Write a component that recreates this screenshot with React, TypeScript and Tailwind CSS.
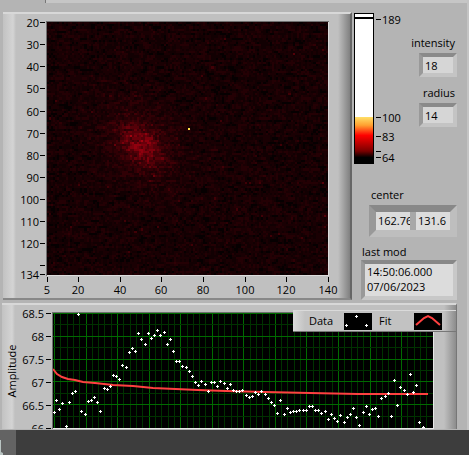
import React from 'react';

const COLS = 135;
const ROWS = 114;

// One colour per intensity level, dark to bright
const levelColors = [
  '#120002', '#1a0003', '#240004', '#300005', '#400006', '#540008',
  '#68000a', '#7c000c', '#90000e', '#a40410', '#b80a14',
];

const buildLevels = () => {
  let seed = 20230706;
  const random = () => {
    seed = (seed * 1664525 + 1013904223) % 4294967296;
    return seed / 4294967296;
  };
  const paths: string[] = levelColors.map(() => '');
  for (let y = 0; y < ROWS; y++) {
    let drift = 0.5;
    for (let x = 0; x < COLS; x++) {
      const u = (x - 45 + (y - 55)) / 1.414;
      const v = (x - 45 - (y - 55)) / 1.414;
      const core = Math.exp(-(u * u) / 130 - (v * v) / 65);
      const halo = Math.exp(-(u * u) / 480 - (v * v) / 240);
      // Neighbouring cells share part of their noise
      drift = drift * 0.35 + random() * 0.65;
      const noise = drift * 4.4 - 1.1;
      const hot = random() > 0.994 ? 2.5 : 0;
      const value = Math.floor(noise + hot + core * (3 + random() * 2) + halo * (1.6 + random() * 1.4));
      if (value < 0) continue;
      paths[Math.min(value, levelColors.length - 1)] += `M${x} ${y}h1v1h-1z`;
    }
  }
  return paths;
};

const levels = buildLevels();

const yTicks = [20, 30, 40, 50, 60, 70, 80, 90, 100, 110, 120, 130, 134];
const xTicks = [5, 20, 40, 60, 80, 100, 120, 140];

const IntensityGraph: React.FC = () => (
  <svg viewBox="0 0 347 284" className="block w-full h-auto text-[11px]" role="img" aria-label="Intensity graph">
    <rect x="43" y="7" width="283" height="255" fill="#707070" />
    <rect x="44" y="8" width="282" height="254" fill="#dcdcdc" />
    <svg x="44" y="8" width="281" height="253" viewBox="0 0 135 114" preserveAspectRatio="none">
      <rect width="135" height="114" fill="#060001" />
      {levels.map((d, i) => (
        <path key={i} d={d} fill={levelColors[i]} shapeRendering="crispEdges" />
      ))}
    </svg>
    <rect x="185" y="114" width="2" height="2" fill="#ffe04a" />
    {yTicks.map((value) => {
      const y = Math.round(8 + (value - 20) * 2.213);
      return (
        <g key={value}>
          <rect x="37" y={y} width="5" height="1" />
          {value !== 130 && <text x="36" y={y + 5} textAnchor="end">{value}</text>}
        </g>
      );
    })}
    {xTicks.map((value) => {
      const x = Math.round(44 + (value - 5) * 2.08);
      return (
        <g key={value}>
          <rect x={x} y="263" width="1" height="5" />
          <text x={x} y="280" textAnchor="middle">{value}</text>
        </g>
      );
    })}
  </svg>
);

const rampLabels = [
  { value: 189, y: 6 },
  { value: 100, y: 104 },
  { value: 83, y: 123 },
  { value: 64, y: 144 },
];

const ColorRamp: React.FC = () => (
  <svg width="50" height="151" viewBox="0 0 50 151" className="shrink-0 text-[11px]" role="img" aria-label="Color ramp">
    <defs>
      <linearGradient id="ramp" x1="0" y1="0" x2="0" y2="1">
        <stop offset="0" stopColor="#ffe068" />
        <stop offset="0.18" stopColor="#ffa030" />
        <stop offset="0.4" stopColor="#ff0000" />
        <stop offset="0.74" stopColor="#7a0000" />
        <stop offset="0.88" stopColor="#000000" />
      </linearGradient>
    </defs>
    <rect width="20" height="151" />
    <rect x="1" y="1" width="18" height="103" fill="#fff" />
    <rect x="1" y="4" width="18" height="2" />
    <rect x="1" y="104" width="18" height="46" fill="url(#ramp)" />
    {rampLabels.map((label) => (
      <g key={label.value}>
        <rect x="22" y={label.y} width="5" height="1" />
        <text x="28" y={label.y + 5}>{label.value}</text>
      </g>
    ))}
    <rect x="22" y="138" width="5" height="1" />
  </svg>
);

const points = [
  [1, 99], [3, 87], [6, 96], [9, 90], [13, 113], [16, 89], [19, 80], [22, 78], [25, 1], [28, 98],
  [32, 101], [35, 88], [38, 87], [41, 84], [44, 89], [47, 98], [51, 75], [54, 76], [57, 73], [60, 62],
  [63, 63], [66, 66], [69, 52], [73, 54], [76, 39], [79, 35], [82, 38], [85, 20], [88, 26], [92, 31],
  [95, 20], [98, 25], [101, 22], [104, 17], [107, 22], [111, 19], [114, 31], [117, 26], [120, 38], [123, 48],
  [126, 48], [129, 53], [133, 54], [136, 58], [139, 63], [142, 69], [145, 72], [148, 68], [152, 71], [155, 78],
  [158, 69], [161, 69], [164, 73], [167, 68], [171, 70], [174, 75], [177, 71], [180, 77], [183, 78], [186, 78],
  [189, 77], [193, 82], [196, 84], [199, 83], [202, 79], [205, 81], [208, 78], [212, 81], [215, 85], [218, 89],
  [221, 92], [224, 100], [227, 87], [231, 101], [234, 95], [237, 99], [240, 98], [243, 98], [246, 97], [250, 97],
  [253, 97], [256, 93], [259, 93], [262, 97], [265, 97], [268, 100], [272, 98], [275, 106], [278, 101], [281, 105],
  [284, 108], [287, 102], [291, 109], [294, 104], [297, 101], [300, 95], [303, 104], [306, 112], [310, 99], [313, 93],
  [316, 101], [319, 96], [322, 95], [325, 103], [328, 85], [332, 83], [335, 80], [338, 103], [341, 67], [344, 92],
  [347, 74], [351, 77], [354, 81], [357, 61], [360, 79], [363, 72], [366, 109], [370, 114],
];

const amplitudeTicks = ['68.5', '68', '67.5', '67', '66.5', '66'];

const marker = (x: number, y: number) => `M${x - 1} ${y}h3v1h-3zM${x} ${y - 1}h1v3h-1z`;

const AmplitudeChart: React.FC = () => (
  <svg viewBox="0 0 454 124" className="block w-full h-auto text-[11px]" role="img" aria-label="Amplitude chart">
    <text transform="translate(14 66) rotate(-90)" textAnchor="middle">Amplitude</text>
    {amplitudeTicks.map((label, i) => {
      const y = Math.round(8 + i * 22.9);
      return (
        <g key={label}>
          <rect x="44" y={y} width="5" height="1" />
          <text x="42" y={y + 5} textAnchor="end">{label}</text>
        </g>
      );
    })}
    <rect x="50" y="7" width="382" height="117" fill="#707070" />
    <rect x="51" y="8" width="381" height="116" fill="#e8e8e8" />
    <svg x="51" y="8" width="380" height="115">
      <rect width="380" height="115" />
      {Array.from({ length: 60 }, (_, i) => (
        <rect key={i} x={Math.round(1 + i * 6.31)} y="0" width="1" height="115" fill={i % 5 ? '#003200' : '#006a00'} />
      ))}
      {Array.from({ length: 10 }, (_, i) => (
        <rect key={i} x="0" y={Math.round(i * 11.4)} width="380" height="1" fill={i % 2 ? '#003200' : '#006a00'} />
      ))}
      <path
        d="M0 56L4 61L9 64L15 66L22 67L30 69L42 70L60 72L80 73L100 75L145 77L173 78L212 79L257 80L305 81H375"
        fill="none"
        stroke="#ff4040"
        strokeWidth="2"
      />
      <path d={points.map(([x, y]) => marker(x, y)).join('')} fill="#fff" />
    </svg>
  </svg>
);

const Legend: React.FC = () => (
  <div className="absolute right-0 top-[5px] flex h-[22px] w-[163px] items-center border-b border-t border-b-[#777] border-t-[#dadada] bg-[linear-gradient(to_right,#dcdcdc,#c2c2c2_12px,#c2c2c2_calc(100%-12px),#8c8c8c)] pl-4">
    <span className="w-[35px]">Data</span>
    <svg width="28" height="17" viewBox="0 0 28 17">
      <rect width="28" height="17" />
      <path d={marker(2, 12) + marker(12, 3) + marker(22, 12)} fill="#fff" />
    </svg>
    <span className="w-[42px] pl-[7px]">Fit</span>
    <svg width="28" height="17" viewBox="0 0 28 17">
      <rect width="28" height="17" />
      <path d="M2 12L10 5L14 3L18 5L26 12" fill="none" stroke="#ff4040" strokeWidth="2" />
    </svg>
  </div>
);

const sunken = 'border-4 border-t-[#8a8a8a] border-l-[#999] border-r-[#c4c4c4] border-b-[#c4c4c4]';

const NumberField: React.FC<{ id: string; label: string; value: string }> = ({ id, label, value }) => (
  <div className="flex flex-col items-end gap-0.5">
    <label htmlFor={id} className="px-0.5">{label}</label>
    <input
      id={id}
      readOnly
      value={value}
      className={`block h-6 w-[38px] bg-[#d6d6d6] pl-0.5 outline-none ${sunken}`}
    />
  </div>
);

const App: React.FC = () => {
  return (
    <div className="flex h-screen flex-col overflow-hidden bg-[#b4b4b4] font-['Open_Sans',sans-serif] text-[11px] leading-4 text-black">
      <div className="flex min-h-0 flex-1 flex-col border-r-2 border-[#c4c4c4]">
        <div className="h-3 shrink-0">
          <div className="ml-[45px] h-[3px] border-l border-[#777] bg-[#c6c6c6]" />
        </div>

        <div className="flex shrink-0 pl-[3px]">
          <div className="min-w-0 flex-1 self-start border-b-2 border-r-2 border-t-2 border-b-[#888] border-r-[#666] border-t-[#d8d8d8] bg-[linear-gradient(to_right,#c2c2c2,#d4d4d4_10px,#c0c0c0_13px,#c0c0c0_calc(100%-12px),#808080)]">
            <IntensityGraph />
          </div>

          <div className="flex w-[115px] shrink-0 flex-col pl-0.5 pr-2.5 pt-px">
            <div className="flex justify-between">
              <ColorRamp />
              <div className="flex flex-col gap-2 pt-[22px]">
                <NumberField id="intensity" label="intensity" value="18" />
                <NumberField id="radius" label="radius" value="14" />
              </div>
            </div>

            <fieldset className="ml-[15px] mt-[23px] min-w-0">
              <legend className="mb-0.5 px-0.5">center</legend>
              <div className="flex h-8 gap-1.5 border-[7px] border-b-[#bebebe] border-l-[#999] border-r-[#bebebe] border-t-[#888] bg-[#a8a8a8]">
                <input aria-label="center x" readOnly value="162.76" className="w-0 min-w-0 flex-1 bg-[#dcdcdc] pl-0.5 outline-none" />
                <input aria-label="center y" readOnly value="131.6" className="w-0 min-w-0 flex-1 bg-[#dcdcdc] pl-0.5 outline-none" />
              </div>
            </fieldset>

            <label htmlFor="last-mod" className="ml-2 mt-[7px]">last mod</label>
            <textarea
              id="last-mod"
              readOnly
              rows={2}
              value={'14:50:06.000\n07/06/2023'}
              className="ml-[7px] block h-10 resize-none overflow-hidden border-4 border-b-[#c8c8c8] border-l-[#999] border-r-[#c8c8c8] border-t-[#888] bg-[#dcdcdc] pl-0.5 leading-[15px] outline-none"
            />
          </div>
        </div>

        <div className="relative ml-0.5 mr-2.5 mt-[3px] border-r border-t-2 border-r-[#777] border-t-[#d8d8d8] bg-[linear-gradient(to_right,#c2c2c2,#d4d4d4_10px,#c0c0c0_13px,#c0c0c0_calc(100%-12px),#8c8c8c)]">
          <AmplitudeChart />
          <Legend />
        </div>
      </div>

      <div className="flex h-[25px] shrink-0 bg-[#3d3d3d]">
        <div className="w-4 bg-[#636363]">
          <svg width="16" height="25" viewBox="0 0 16 25">
            <path d="M0 10h1v12l2 1v2H0z" fill="#b9c4c2" />
          </svg>
        </div>
      </div>
    </div>
  );
};

export default App;
